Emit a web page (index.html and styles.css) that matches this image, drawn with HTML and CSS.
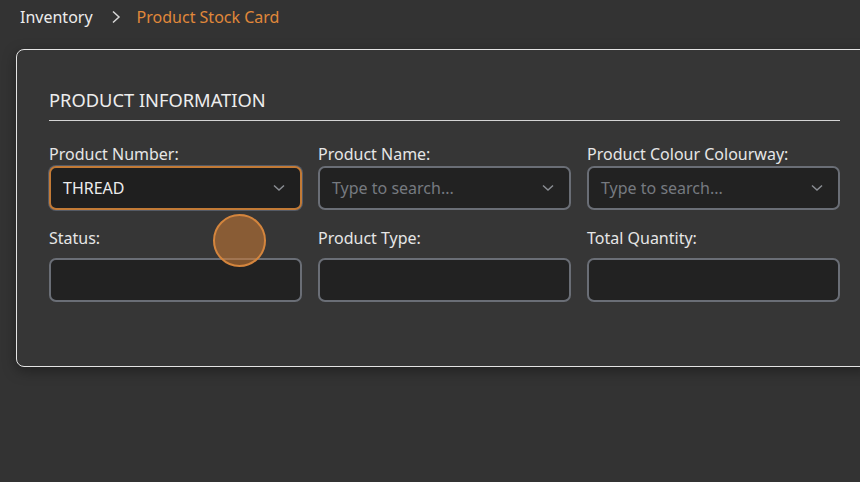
FILE: index.html
```html
<!DOCTYPE html>
<html>
<head>
<meta charset="utf-8">
<link rel="stylesheet" href="styles.css">
</head>
<body>
<div class="page">
  <nav class="crumbs">
    <span class="crumb">Inventory</span>
    <svg class="sep" width="10" height="14" viewBox="0 0 10 14"><path d="M2 1.5 L8 7 L2 12.5" fill="none" stroke="#d8d8d8" stroke-width="1.5"/></svg>
    <span class="crumb current">Product Stock Card</span>
  </nav>
  <section class="card">
    <h2 class="title">PRODUCT INFORMATION</h2>
    <div class="grid">
      <div class="field row1">
        <label>Product Number:</label>
        <div class="input focused"><span class="value">THREAD</span>
          <svg class="chev" width="12" height="8" viewBox="0 0 12 8"><path d="M1 1.5 L6 6 L11 1.5" fill="none" stroke="#8a8d93" stroke-width="1.5"/></svg></div>
      </div>
      <div class="field row1">
        <label>Product Name:</label>
        <div class="input"><span class="ph">Type to search...</span>
          <svg class="chev" width="12" height="8" viewBox="0 0 12 8"><path d="M1 1.5 L6 6 L11 1.5" fill="none" stroke="#8a8d93" stroke-width="1.5"/></svg></div>
      </div>
      <div class="field row1">
        <label>Product Colour Colourway:</label>
        <div class="input"><span class="ph">Type to search...</span>
          <svg class="chev" width="12" height="8" viewBox="0 0 12 8"><path d="M1 1.5 L6 6 L11 1.5" fill="none" stroke="#8a8d93" stroke-width="1.5"/></svg></div>
      </div>
      <div class="field row2">
        <label>Status:</label>
        <div class="input"></div>
      </div>
      <div class="field row2">
        <label>Product Type:</label>
        <div class="input"></div>
      </div>
      <div class="field row2">
        <label>Total Quantity:</label>
        <div class="input"></div>
      </div>
    </div>
  </section>
  <div class="touch"></div>
</div>
</body>
</html>
```
FILE: styles.css
```css
* { box-sizing: border-box; }
html, body { margin: 0; height: 100%; }
body {
  background: #333333;
  font-family: "Noto Sans", "Open Sans", sans-serif;
  color: #e6e6e6;
  overflow: hidden;
}
.page { position: relative; padding: 0 0 0 16px; width: 900px; }
.crumbs {
  display: flex;
  align-items: center;
  height: 34px;
  padding-left: 4px;
  font-size: 16px;
}
.crumb { color: #ececec; }
.sep { margin: 0 16px 0 18px; }
.crumb.current { color: #e0883a; }
.card {
  margin-top: 15px;
  width: 857px;
  border: 1px solid #e4e4e4;
  border-radius: 8px;
  background: #363636;
  padding: 38px 32px 64px;
  box-shadow: 0 4px 14px rgba(0,0,0,0.35);
}
.title {
  margin: 0;
  font-weight: 400;
  font-size: 18.3px;
  line-height: 24px;
  color: #ededed;
  padding-bottom: 8px;
  border-bottom: 1px solid #d4d4d4;
}
.grid {
  margin-top: 22px;
  display: grid;
  grid-template-columns: repeat(3, 253px);
  column-gap: 16px;
}
.field label {
  display: block;
  font-size: 16px;
  line-height: 22px;
  color: #e6e6e6;
}
.row1 label { margin-bottom: 1px; }
.row2 { margin-top: 17px; }
.row2 label { margin-bottom: 9px; }
.input {
  height: 44px;
  border: 2px solid #6a6e76;
  border-radius: 7px;
  background: #222222;
  display: flex;
  align-items: center;
  padding: 0 15px 0 12px;
  font-size: 16px;
}
.input.focused {
  border-color: #c27a36;
  box-shadow: 0 0 0 1px rgba(110,120,140,0.55);
  background: #1f1f1f;
}
.value { color: #ececec; flex: 1; }
.ph { color: #767a80; flex: 1; }
.chev { flex: none; }
.touch {
  position: absolute;
  left: 213px;
  top: 214px;
  width: 53px;
  height: 53px;
  border-radius: 50%;
  background: rgba(205,124,52,0.55);
  border: 2px solid #d4853d;
}
```
